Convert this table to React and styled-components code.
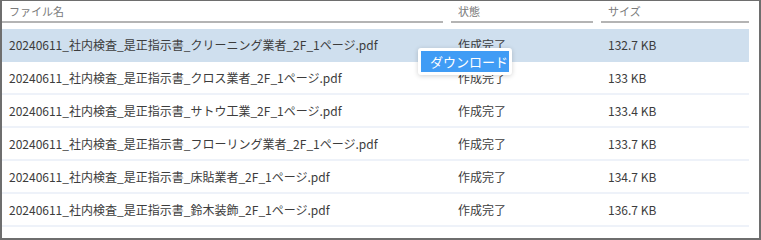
import React from "react";
import styled, { createGlobalStyle } from "styled-components";

const Global = createGlobalStyle`
  html, body { margin: 0; padding: 0; background: #fff; }
  body { font-family: "Noto Sans CJK JP", "Noto Sans", sans-serif; }
`;

const Frame = styled.div`
  width: 761px;
  height: 240px;
  box-sizing: border-box;
  border: 2px solid #6e6e6e;
  border-top-width: 1px;
  background: #fff;
  position: relative;
  overflow: hidden;
`;

const Table = styled.div`
  width: 747px;
  display: flex;
  flex-direction: column;
`;

const Grid = styled.div`
  display: grid;
  grid-template-columns: 441px 142px 148px;
  column-gap: 8px;
`;

const HeaderRow = styled(Grid)`
  height: 22px;
  margin-bottom: 6px;
`;

const HeaderCell = styled.div`
  border-bottom: 2px solid #b4b4b4;
  padding-left: 7px;
  font-size: 11px;
  line-height: 20px;
  color: #7a7a7a;
  box-sizing: border-box;
`;

const Row = styled(Grid)`
  height: 33px;
  box-sizing: border-box;
  border-bottom: 2px solid ${(p) => (p.$selected ? "#cfdfee" : "#eef2f9")};
  background: ${(p) => (p.$selected ? "#cfdfee" : "transparent")};
  align-items: center;
`;

const Cell = styled.div`
  padding-left: 7px;
  font-size: 12px;
  line-height: 31px;
  color: #3c3c3c;
  white-space: nowrap;
`;

const Menu = styled.div`
  position: absolute;
  left: 416px;
  top: 47px;
  width: 94px;
  padding: 3px;
  box-sizing: border-box;
  background: #fff;
  border-radius: 3px;
  box-shadow: 0 1px 5px rgba(0, 0, 0, 0.18);
`;

const MenuItem = styled.div`
  background: #409cf5;
  color: #fff;
  font-size: 13px;
  line-height: 21px;
  padding-left: 9px;
  white-space: nowrap;
`;

const rows = [
  ["20240611_社内検査_是正指示書_クリーニング業者_2F_1ページ.pdf", "作成完了", "132.7 KB"],
  ["20240611_社内検査_是正指示書_クロス業者_2F_1ページ.pdf", "作成完了", "133 KB"],
  ["20240611_社内検査_是正指示書_サトウ工業_2F_1ページ.pdf", "作成完了", "133.4 KB"],
  ["20240611_社内検査_是正指示書_フローリング業者_2F_1ページ.pdf", "作成完了", "133.7 KB"],
  ["20240611_社内検査_是正指示書_床貼業者_2F_1ページ.pdf", "作成完了", "134.7 KB"],
  ["20240611_社内検査_是正指示書_鈴木装飾_2F_1ページ.pdf", "作成完了", "136.7 KB"],
];

export default function App() {
  return (
    <>
      <Global />
      <Frame>
        <Table>
          <HeaderRow>
            <HeaderCell>ファイル名</HeaderCell>
            <HeaderCell>状態</HeaderCell>
            <HeaderCell>サイズ</HeaderCell>
          </HeaderRow>
          {rows.map((r, i) => (
            <Row key={i} $selected={i === 0}>
              <Cell>{r[0]}</Cell>
              <Cell>{r[1]}</Cell>
              <Cell>{r[2]}</Cell>
            </Row>
          ))}
        </Table>
        <Menu>
          <MenuItem>ダウンロード</MenuItem>
        </Menu>
      </Frame>
    </>
  );
}
